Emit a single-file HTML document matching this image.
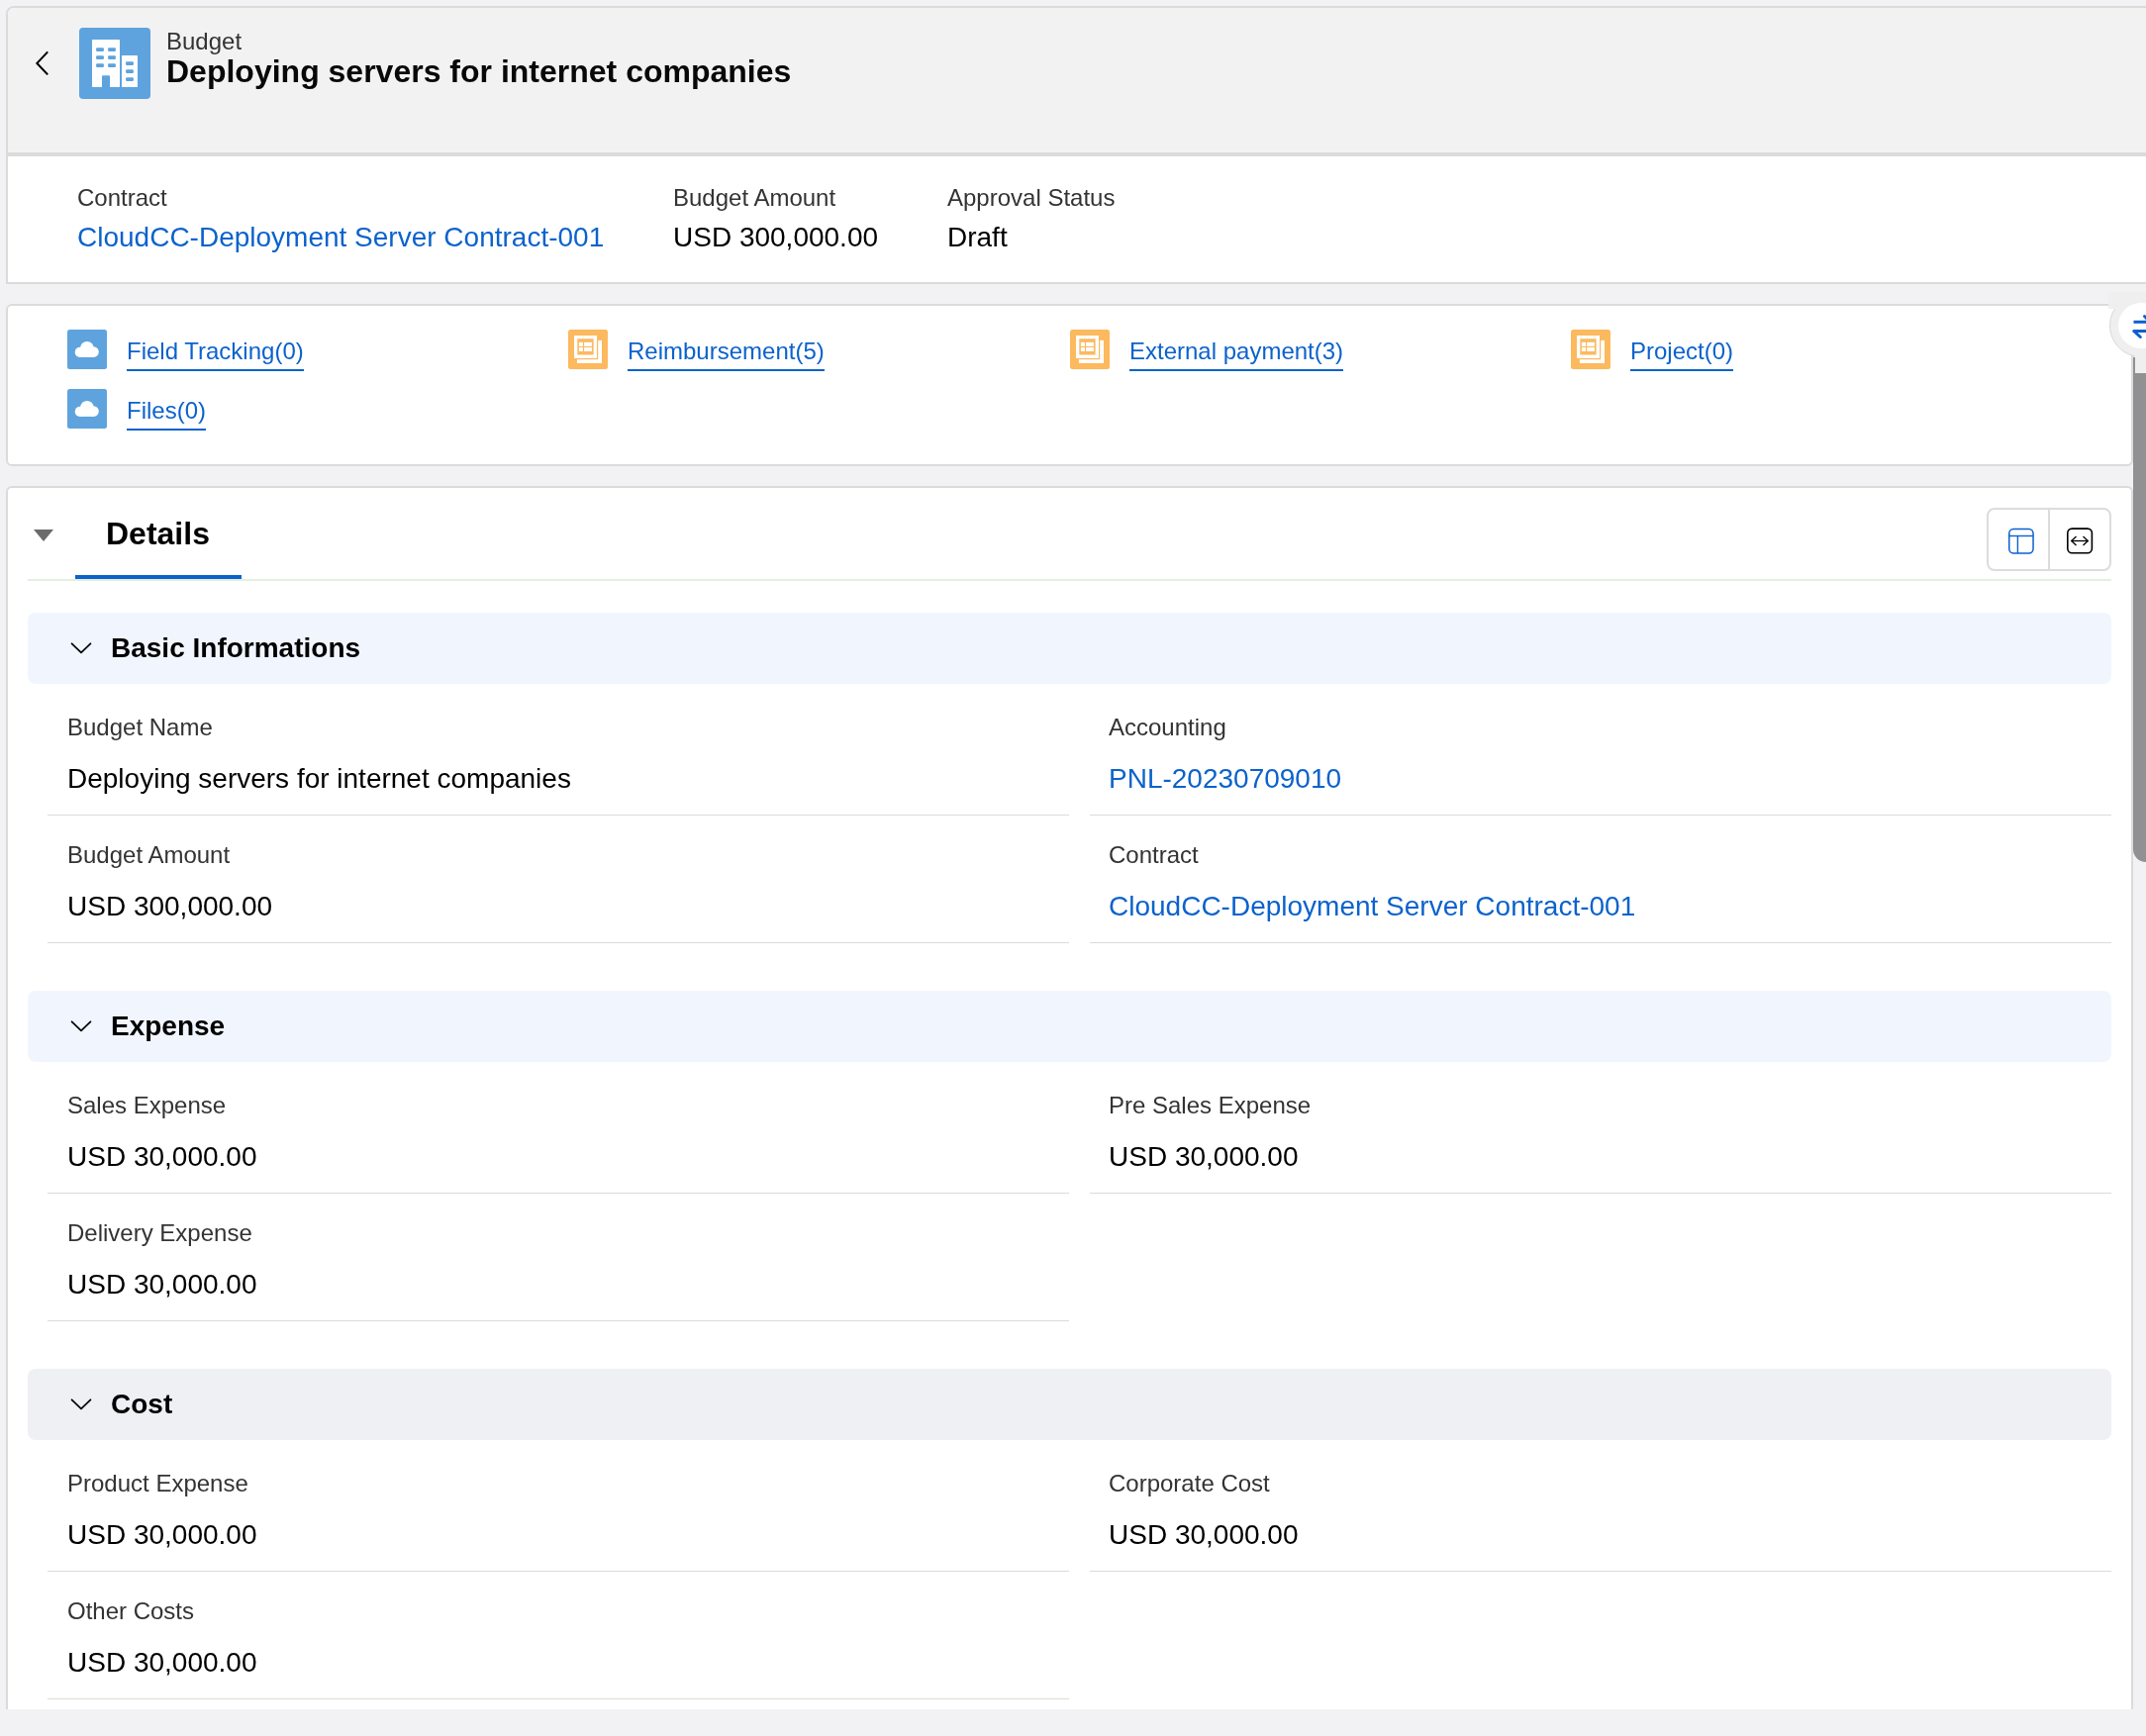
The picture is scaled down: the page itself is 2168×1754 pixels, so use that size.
<!DOCTYPE html>
<html><head><meta charset="utf-8">
<style>
*{box-sizing:border-box;margin:0;padding:0}
html,body{width:2168px;height:1754px;overflow:hidden}
body{position:relative;background:#f2f2f4;font-family:"Liberation Sans",sans-serif;color:#000}
.t24,.t28,.b28,.b32,.rl{will-change:transform}
.a{position:absolute}
.t24{position:absolute;font-size:24px;line-height:24px;white-space:nowrap}
.t28{position:absolute;font-size:28px;line-height:28px;white-space:nowrap}
.b28{position:absolute;font-size:28px;line-height:28px;font-weight:bold;white-space:nowrap}
.b32{position:absolute;font-size:32px;line-height:32px;font-weight:bold;white-space:nowrap}
.lbl{color:#333}
.lnk{color:#0b62cc}
.card{position:absolute;background:#fff;border:2px solid #dcdbd9}
.div{position:absolute;height:1px;background:#dcdbd9}
.sec{position:absolute;left:28px;width:2105px;height:72px;border-radius:8px;background:#f1f6fe}
.rl{position:absolute;font-size:24px;line-height:24px;color:#0b62cc;white-space:nowrap;border-bottom:2px solid #0b62cc;padding-bottom:6px}
</style></head><body>

<!-- Card 1: header + highlights -->
<div class="card" style="left:6px;top:6px;width:2200px;height:281px;border-top-left-radius:8px;background:#fff"></div>
<div class="a" style="left:8px;top:8px;width:2160px;height:146px;background:#f2f2f2;border-top-left-radius:6px"></div>
<div class="a" style="left:8px;top:154px;width:2160px;height:4px;background:#dcdbd9"></div>

<svg class="a" style="left:30px;top:46px" width="26" height="36" viewBox="30 46 26 36">
<polyline points="48.2,52.4 37.4,63.9 48.2,75.4" fill="none" stroke="#000" stroke-width="2.1"/>
</svg>

<svg class="a" style="left:80px;top:28px" width="72" height="72" viewBox="0 0 72 72">
<rect width="72" height="72" rx="4" fill="#5ea3de"/>
<rect x="13" y="12" width="28" height="48" rx="0.7" fill="#fff"/><rect x="23" y="48.3" width="8" height="14" rx="0.8" fill="#5ea3de"/>
<rect x="43" y="28" width="16" height="32" rx="0.7" fill="#fff"/>
<g fill="#5ea3de">
<rect x="17.1" y="20.3" width="7.8" height="3.7" rx="1"/><rect x="29.1" y="20.3" width="7.8" height="3.7" rx="1"/>
<rect x="17.1" y="28.3" width="7.8" height="3.7" rx="1"/><rect x="29.1" y="28.3" width="7.8" height="3.7" rx="1"/>
<rect x="17.1" y="36.3" width="7.8" height="3.7" rx="1"/><rect x="29.1" y="36.3" width="7.8" height="3.7" rx="1"/>
<rect x="47.1" y="34.2" width="7.8" height="3.8" rx="1"/><rect x="47.1" y="42.3" width="7.8" height="3.7" rx="1"/><rect x="47.1" y="50.3" width="7.8" height="3.7" rx="1"/>
</g>
</svg>

<div class="t24" style="left:168px;top:30px;color:#333">Budget</div>
<div class="b32" style="left:168px;top:56px;color:#080808">Deploying servers for internet companies</div>

<div class="t24 lbl" style="left:78px;top:188px">Contract</div>
<div class="t28 lnk" style="left:78px;top:226px">CloudCC-Deployment Server Contract-001</div>
<div class="t24 lbl" style="left:680px;top:188px">Budget Amount</div>
<div class="t28" style="left:680px;top:226px;color:#000">USD 300,000.00</div>
<div class="t24 lbl" style="left:957px;top:188px">Approval Status</div>
<div class="t28" style="left:957px;top:226px;color:#000">Draft</div>

<!-- Card 2: related lists -->
<div class="card" style="left:6px;top:307px;width:2149px;height:164px;border-radius:6px"></div>

<!-- CARD2_ITEMS -->
<svg class="a" style="left:68px;top:333px" width="40" height="40" viewBox="0 0 40 40"><rect width="40" height="40" rx="2.5" fill="#5ea3de"/><g fill="#fff"><circle cx="19.9" cy="18.6" r="6.7"/><circle cx="12.8" cy="22.9" r="5.1"/><circle cx="26.5" cy="22.6" r="5.3"/><rect x="12.8" y="17.8" width="13.7" height="10.1"/></g></svg>
<div class="rl" style="left:128px;top:343px">Field Tracking(0)</div>
<svg class="a" style="left:574px;top:333px" width="40" height="40" viewBox="0 0 40 40"><rect width="40" height="40" rx="2.5" fill="#fcb95e"/><path fill="#fff" fill-rule="evenodd" d="M6 6h23v23H6z M9.3 9.3v16.3h16.3V9.3z"/><g fill="#fff"><rect x="10.9" y="12.8" width="4.1" height="4.1"/><rect x="16.1" y="12.8" width="7.8" height="4.1"/><rect x="10.9" y="18" width="4.1" height="4"/><rect x="16.1" y="18" width="7.8" height="4"/><rect x="30.2" y="10.9" width="3.8" height="23.1"/><rect x="8.9" y="30.2" width="25.1" height="3.8"/></g></svg>
<div class="rl" style="left:634px;top:343px">Reimbursement(5)</div>
<svg class="a" style="left:1081px;top:333px" width="40" height="40" viewBox="0 0 40 40"><rect width="40" height="40" rx="2.5" fill="#fcb95e"/><path fill="#fff" fill-rule="evenodd" d="M6 6h23v23H6z M9.3 9.3v16.3h16.3V9.3z"/><g fill="#fff"><rect x="10.9" y="12.8" width="4.1" height="4.1"/><rect x="16.1" y="12.8" width="7.8" height="4.1"/><rect x="10.9" y="18" width="4.1" height="4"/><rect x="16.1" y="18" width="7.8" height="4"/><rect x="30.2" y="10.9" width="3.8" height="23.1"/><rect x="8.9" y="30.2" width="25.1" height="3.8"/></g></svg>
<div class="rl" style="left:1141px;top:343px">External payment(3)</div>
<svg class="a" style="left:1587px;top:333px" width="40" height="40" viewBox="0 0 40 40"><rect width="40" height="40" rx="2.5" fill="#fcb95e"/><path fill="#fff" fill-rule="evenodd" d="M6 6h23v23H6z M9.3 9.3v16.3h16.3V9.3z"/><g fill="#fff"><rect x="10.9" y="12.8" width="4.1" height="4.1"/><rect x="16.1" y="12.8" width="7.8" height="4.1"/><rect x="10.9" y="18" width="4.1" height="4"/><rect x="16.1" y="18" width="7.8" height="4"/><rect x="30.2" y="10.9" width="3.8" height="23.1"/><rect x="8.9" y="30.2" width="25.1" height="3.8"/></g></svg>
<div class="rl" style="left:1647px;top:343px">Project(0)</div>
<svg class="a" style="left:68px;top:393px" width="40" height="40" viewBox="0 0 40 40"><rect width="40" height="40" rx="2.5" fill="#5ea3de"/><g fill="#fff"><circle cx="19.9" cy="18.6" r="6.7"/><circle cx="12.8" cy="22.9" r="5.1"/><circle cx="26.5" cy="22.6" r="5.3"/><rect x="12.8" y="17.8" width="13.7" height="10.1"/></g></svg>
<div class="rl" style="left:128px;top:403px">Files(0)</div>
<!-- /CARD2_ITEMS -->

<!-- Card 3: details -->
<div class="card" style="left:6px;top:491px;width:2149px;height:1400px;border-radius:6px"></div>

<!-- DETAILS -->
<svg class="a" style="left:34px;top:535px" width="20" height="12" viewBox="0 0 20 12"><polygon points="0,0 20,0 10,12" fill="#6b6b6b"/></svg>
<div class="b32" style="left:107px;top:523px">Details</div>
<div class="a" style="left:28px;top:585px;width:2105px;height:2px;background:#e3f0e0"></div>
<div class="a" style="left:76px;top:581px;width:168px;height:4px;background:#0b62cc"></div>
<div class="a" style="left:2007px;top:513px;width:126px;height:64px;border:2px solid #dcdcdc;border-radius:8px;background:#fff"></div>
<div class="a" style="left:2069px;top:515px;width:2px;height:60px;background:#dcdcdc"></div>
<svg class="a" style="left:2020px;top:525px" width="44" height="44" viewBox="2020 525 44 44"><rect x="2029.75" y="534.55" width="24.3" height="24.4" rx="4.4" fill="none" stroke="#0b62cc" stroke-width="1.5"/><line x1="2029.75" y1="541.5" x2="2054.05" y2="541.5" stroke="#0b62cc" stroke-width="1.4"/><line x1="2038.4" y1="541.5" x2="2038.4" y2="558.9" stroke="#0b62cc" stroke-width="1.4"/></svg>
<svg class="a" style="left:2080px;top:525px" width="44" height="44" viewBox="2080 525 44 44"><rect x="2088.8" y="534.1" width="24.6" height="24.6" rx="4.5" fill="none" stroke="#000" stroke-width="1.6"/><line x1="2092.6" y1="546.5" x2="2109.4" y2="546.5" stroke="#000" stroke-width="1.3"/><polyline points="2097.5,542.1 2092.7,546.5 2097.5,550.9" fill="none" stroke="#000" stroke-width="1.3"/><polyline points="2104.5,542.1 2109.3,546.5 2104.5,550.9" fill="none" stroke="#000" stroke-width="1.3"/></svg>
<div class="sec" style="top:619px;background:#f1f6fe"></div>
<svg class="a" style="left:70px;top:648px" width="24" height="14" viewBox="0 0 24 14"><polyline points="2.6,2.3 12,11.3 21.4,2.3" fill="none" stroke="#000" stroke-width="1.8" stroke-linecap="round" stroke-linejoin="round"/></svg>
<div class="b28" style="left:112px;top:641px">Basic Informations</div>
<div class="t24 lbl" style="left:68px;top:723px">Budget Name</div>
<div class="t28" style="left:68px;top:773px;color:#000">Deploying servers for internet companies</div>
<div class="div" style="left:48px;top:823px;width:1032px"></div>
<div class="t24 lbl" style="left:1120px;top:723px">Accounting</div>
<div class="t28" style="left:1120px;top:773px;color:#0b62cc">PNL-20230709010</div>
<div class="div" style="left:1101px;top:823px;width:1032px"></div>
<div class="t24 lbl" style="left:68px;top:852px">Budget Amount</div>
<div class="t28" style="left:68px;top:902px;color:#000">USD 300,000.00</div>
<div class="div" style="left:48px;top:952px;width:1032px"></div>
<div class="t24 lbl" style="left:1120px;top:852px">Contract</div>
<div class="t28" style="left:1120px;top:902px;color:#0b62cc">CloudCC-Deployment Server Contract-001</div>
<div class="div" style="left:1101px;top:952px;width:1032px"></div>
<div class="sec" style="top:1001px;background:#f1f6fe"></div>
<svg class="a" style="left:70px;top:1030px" width="24" height="14" viewBox="0 0 24 14"><polyline points="2.6,2.3 12,11.3 21.4,2.3" fill="none" stroke="#000" stroke-width="1.8" stroke-linecap="round" stroke-linejoin="round"/></svg>
<div class="b28" style="left:112px;top:1023px">Expense</div>
<div class="t24 lbl" style="left:68px;top:1105px">Sales Expense</div>
<div class="t28" style="left:68px;top:1155px;color:#000">USD 30,000.00</div>
<div class="div" style="left:48px;top:1205px;width:1032px"></div>
<div class="t24 lbl" style="left:1120px;top:1105px">Pre Sales Expense</div>
<div class="t28" style="left:1120px;top:1155px;color:#000">USD 30,000.00</div>
<div class="div" style="left:1101px;top:1205px;width:1032px"></div>
<div class="t24 lbl" style="left:68px;top:1234px">Delivery Expense</div>
<div class="t28" style="left:68px;top:1284px;color:#000">USD 30,000.00</div>
<div class="div" style="left:48px;top:1334px;width:1032px"></div>
<div class="sec" style="top:1383px;background:#eff0f4"></div>
<svg class="a" style="left:70px;top:1412px" width="24" height="14" viewBox="0 0 24 14"><polyline points="2.6,2.3 12,11.3 21.4,2.3" fill="none" stroke="#000" stroke-width="1.8" stroke-linecap="round" stroke-linejoin="round"/></svg>
<div class="b28" style="left:112px;top:1405px">Cost</div>
<div class="t24 lbl" style="left:68px;top:1487px">Product Expense</div>
<div class="t28" style="left:68px;top:1537px;color:#000">USD 30,000.00</div>
<div class="div" style="left:48px;top:1587px;width:1032px"></div>
<div class="t24 lbl" style="left:1120px;top:1487px">Corporate Cost</div>
<div class="t28" style="left:1120px;top:1537px;color:#000">USD 30,000.00</div>
<div class="div" style="left:1101px;top:1587px;width:1032px"></div>
<div class="t24 lbl" style="left:68px;top:1616px">Other Costs</div>
<div class="t28" style="left:68px;top:1666px;color:#000">USD 30,000.00</div>
<div class="div" style="left:48px;top:1716px;width:1032px"></div>
<!-- /DETAILS -->

<!-- bottom page bg strip -->
<div class="a" style="left:0;top:1727px;width:2168px;height:27px;background:#f2f2f4"></div>

<!-- OVERLAYS -->
<div class="a" style="left:2155px;top:361px;width:26px;height:510px;background:#919193;border-radius:0 0 13px 13px"></div>
<div class="a" style="left:2131px;top:297px;width:64px;height:64px;border-radius:50%;background:#efefef;border:1px solid #d8d8d8"></div>
<div class="a" style="left:2130px;top:295px;width:38px;height:17px;background:#efefef"></div>
<div class="a" style="left:2157px;top:355px;width:11px;height:22px;background:#efefef"></div>
<div class="a" style="left:2140px;top:306px;width:46px;height:46px;border-radius:50%;background:#fff"></div>
<svg class="a" style="left:2140px;top:306px" width="28" height="46" viewBox="2140 306 28 46"><g fill="none" stroke="#0b5fd0" stroke-width="3" stroke-linecap="round" stroke-linejoin="round"><line x1="2155.5" y1="325.3" x2="2175" y2="325.3" stroke-linecap="butt"/><polyline points="2166.5,319.5 2172,325.3"/><line x1="2156" y1="334.6" x2="2175" y2="334.6"/><polyline points="2162.3,340.5 2156,334.6"/></g></svg>
<!-- /OVERLAYS -->
</body></html>
